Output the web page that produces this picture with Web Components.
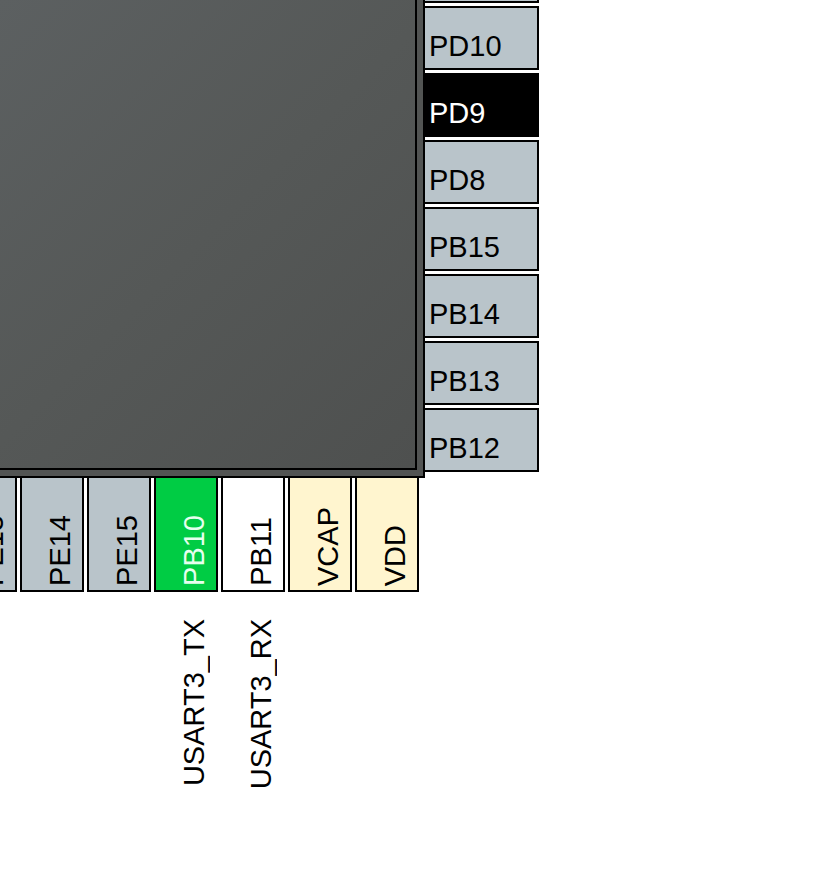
<!DOCTYPE html>
<html lang="en">
<head>
<meta charset="utf-8">
<title>Pinout</title>
<style>
body {
  margin: 0;
  background: #fff;
  color: #000;
  font-family: "Liberation Sans", Arial, sans-serif;
  font-size: 29px;
}
</style>
</head>
<body>
<pinout-view>
  <chip-package></chip-package>

  <chip-pin slot="right"></chip-pin>
  <chip-pin slot="right">PD10</chip-pin>
  <chip-pin slot="right" state="selected">PD9</chip-pin>
  <chip-pin slot="right">PD8</chip-pin>
  <chip-pin slot="right">PB15</chip-pin>
  <chip-pin slot="right">PB14</chip-pin>
  <chip-pin slot="right">PB13</chip-pin>
  <chip-pin slot="right">PB12</chip-pin>

  <chip-pin slot="bottom" side="bottom">PE13</chip-pin>
  <chip-pin slot="bottom" side="bottom">PE14</chip-pin>
  <chip-pin slot="bottom" side="bottom">PE15</chip-pin>
  <chip-pin slot="bottom" side="bottom" state="assigned">PB10<span slot="signal">USART3_TX</span></chip-pin>
  <chip-pin slot="bottom" side="bottom" state="free">PB11<span slot="signal">USART3_RX</span></chip-pin>
  <chip-pin slot="bottom" side="bottom" state="power">VCAP</chip-pin>
  <chip-pin slot="bottom" side="bottom" state="power">VDD</chip-pin>
</pinout-view>

<script>
const define = (name, html) => {
  const template = document.createElement("template");
  template.innerHTML = html;

  customElements.define(name, class extends HTMLElement {
    constructor() {
      super();
      this.attachShadow({ mode: "open" });
      this.shadowRoot.appendChild(template.content.cloneNode(true));
    }
  });
};

define("pinout-view", `\
<style>
:host {
  display: grid;
  grid-template-columns: minmax(0, 1fr) auto;
  grid-template-rows: 478px auto;
  padding-right: 275px;
  overflow: hidden;
}
.right {
  display: flex;
  flex-direction: column;
  justify-content: flex-end;
  gap: 3px;
  padding-bottom: 6px;
  min-height: 0;
}
.bottom {
  display: flex;
  justify-content: flex-end;
  gap: 3px;
  padding-right: 6px;
  min-width: 0;
}
</style>
<slot></slot>
<div class="right"><slot name="right"></slot></div>
<div class="bottom"><slot name="bottom"></slot></div>
`);

define("chip-package", `\
<style>
:host {
  display: grid;
  box-sizing: border-box;
  padding: 0 6px 6px 0;
  border: solid #000;
  border-width: 0 2px 2px 0;
  background: #525453;
}
.die {
  border: solid #000;
  border-width: 0 2px 2px 0;
  background: linear-gradient(135deg, #5c6061, #555857 50%, #4e504f);
}
</style>
<div class="die"></div>
`);

define("chip-pin", `\
<style>
:host {
  --fill: #b9c4ca;
  display: flex;
  flex: none;
}
:host([state="selected"]) {
  --fill: #000;
  --ink: #fff;
}
:host([state="assigned"]) {
  --fill: #00cc44;
  --ink: #e6ffee;
}
:host([state="free"]) {
  --fill: #fff;
}
:host([state="power"]) {
  --fill: #fff5cf;
}
button {
  display: flex;
  align-items: flex-end;
  box-sizing: border-box;
  width: 114px;
  height: 64px;
  margin: 0;
  padding: 0 0 5px 4px;
  border: 2px solid #000;
  border-left: 0;
  border-radius: 0;
  background: var(--fill);
  color: var(--ink, #000);
  font: inherit;
  line-height: 34px;
}
:host([side="bottom"]) {
  flex-direction: column;
  gap: 27px;
  width: 64px;
}
:host([side="bottom"]) button {
  width: 64px;
  height: 114px;
  padding: 0 5px 4px 0;
  border: 2px solid #000;
  border-top: 0;
  justify-content: flex-end;
}
:host([side="bottom"]) .name,
:host([side="bottom"]) .signal {
  writing-mode: vertical-rl;
  transform: rotate(180deg);
  line-height: 34px;
}
:host([side="bottom"]) .signal {
  align-self: flex-end;
  margin-right: 7px;
}
</style>
<button type="button"><span class="name"><slot></slot></span></button>
<span class="signal"><slot name="signal"></slot></span>
`);
</script>
</body>
</html>
